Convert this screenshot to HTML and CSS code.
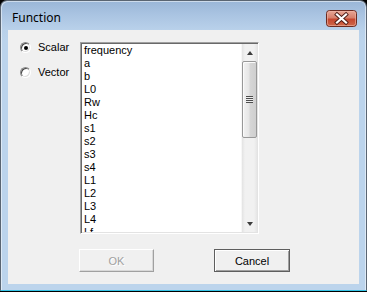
FILE: index.html
```html
<!DOCTYPE html>
<html>
<head>
<meta charset="utf-8">
<link rel="stylesheet" href="styles.css">
</head>
<body>
<div class="window">
  <div class="titlebar">
    <span class="title">Function</span>
    <div class="close">
      <svg width="31" height="17" viewBox="0 0 31 17">
        <defs>
          <linearGradient id="cg" x1="0" y1="0" x2="0" y2="1">
            <stop offset="0" stop-color="#e8a898"/>
            <stop offset="0.45" stop-color="#d7806c"/>
            <stop offset="0.55" stop-color="#c5472f"/>
            <stop offset="1" stop-color="#cf6a4c"/>
          </linearGradient>
        </defs>
        <rect x="0.5" y="0.5" width="30" height="16" rx="3" fill="url(#cg)" stroke="#6b2b21"/>
        <rect x="1.5" y="1.5" width="28" height="14" rx="2" fill="none" stroke="#f0b8a8" stroke-opacity="0.6"/>
        <path d="M11 4.5 L20 12.5 M20 4.5 L11 12.5" stroke="#4a1a14" stroke-width="4" stroke-linecap="square"/>
        <path d="M11 4.5 L20 12.5 M20 4.5 L11 12.5" stroke="#ffffff" stroke-width="2.2" stroke-linecap="square"/>
      </svg>
    </div>
  </div>
  <div class="client">
    <div class="main">
      <div class="radios">
        <div class="radio"><span class="dot checked"></span><span class="label">Scalar</span></div>
        <div class="radio"><span class="dot"></span><span class="label">Vector</span></div>
      </div>
      <div class="listbox">
        <ul class="items">
          <li>frequency</li>
          <li>a</li>
          <li>b</li>
          <li>L0</li>
          <li>Rw</li>
          <li>Hc</li>
          <li>s1</li>
          <li>s2</li>
          <li>s3</li>
          <li>s4</li>
          <li>L1</li>
          <li>L2</li>
          <li>L3</li>
          <li>L4</li>
          <li>Lf</li>
        </ul>
        <div class="scrollbar">
          <div class="arrow"><span class="tri up"></span></div>
          <div class="track">
            <div class="thumb"><span class="grip"></span></div>
          </div>
          <div class="arrow"><span class="tri down"></span></div>
        </div>
      </div>
    </div>
    <div class="buttons">
      <button class="btn disabled">OK</button>
      <button class="btn default">Cancel</button>
    </div>
  </div>
  <div class="bottom"></div>
</div>
</body>
</html>
```

FILE: styles.css
```css
html, body {
  margin: 0;
  padding: 0;
}
body {
  width: 367px;
  height: 292px;
  overflow: hidden;
  background: #000;
}
.window {
  box-sizing: border-box;
  width: 367px;
  height: 291px;
  border: 1px solid #5a6572;
  border-bottom-color: #35c4e6;
  border-radius: 7px 7px 0 0;
  background: linear-gradient(#9ab6d7 0px, #aac4e2 14px, #b9d1ea 29px, #bcd4ec 40px, #bcd4ec 100%);
  padding: 0 7px;
  display: flex;
  flex-direction: column;
  box-shadow: inset 1px 1px 0 rgba(255,255,255,0.5), inset -1px 0 0 rgba(255,255,255,0.5);
}
.titlebar {
  height: 29px;
  flex: none;
  display: flex;
  justify-content: space-between;
  align-items: flex-start;
}
.title {
  font-family: "Noto Sans", "Open Sans", sans-serif;
  font-size: 12px;
  line-height: 16px;
  color: #000;
  padding: 9px 0 0 4px;
}
.close {
  width: 31px;
  height: 17px;
  margin: 9px 2px 0 0;
}
.close svg {
  display: block;
}
.client {
  height: 254px;
  flex: none;
  background: #f0f0f0;
  box-sizing: border-box;
  padding-top: 12px;
  font-family: "Liberation Sans", Arial, sans-serif;
  font-size: 11px;
  color: #000;
}
.main {
  display: flex;
}
.radios {
  width: 72px;
  box-sizing: border-box;
  padding-left: 12px;
  margin-top: -1px;
  display: flex;
  flex-direction: column;
  gap: 12px;
}
.radio {
  display: flex;
  align-items: center;
  height: 13px;
}
.dot {
  box-sizing: border-box;
  width: 11px;
  height: 11px;
  border-radius: 50%;
  border: 1px solid;
  border-color: #8a8a8a #ffffff #ffffff #8a8a8a;
  background: #fff;
  box-shadow: inset 1px 1px 0 #4a4a4a, inset -1px -1px 0 #dcdcdc;
  margin-right: 7px;
  display: flex;
  align-items: center;
  justify-content: center;
}
.dot.checked::after {
  content: "";
  width: 4px;
  height: 4px;
  border-radius: 50%;
  background: #000;
}
.label {
  line-height: 13px;
}
.listbox {
  box-sizing: border-box;
  width: 179px;
  height: 192px;
  border: 1px solid;
  border-color: #a0a0a0 #ffffff #ffffff #a0a0a0;
  background: #fff;
  display: flex;
  padding: 1px;
  box-shadow: inset 1px 1px 0 #696969, inset -1px -1px 0 #e3e3e3;
  overflow: hidden;
}
.items {
  list-style: none;
  margin: 0;
  padding: 0 0 0 2px;
  flex: 1;
  overflow: hidden;
}
.items li {
  height: 13px;
  line-height: 13px;
  white-space: nowrap;
}
.scrollbar {
  width: 15px;
  flex: none;
  display: flex;
  flex-direction: column;
  background: linear-gradient(90deg, #e3e3e3 0%, #f1f1f1 20%, #f1f1f1 80%, #e6e6e6 100%);
  border-left: 1px solid #f7f7f7;
}
.arrow {
  height: 17px;
  flex: none;
  display: flex;
  align-items: center;
  justify-content: center;
}
.tri {
  width: 0;
  height: 0;
  border-left: 3.5px solid transparent;
  border-right: 3.5px solid transparent;
}
.tri.up {
  border-bottom: 4px solid #3c3c3c;
}
.tri.down {
  border-top: 4px solid #3c3c3c;
}
.track {
  flex: 1;
  padding: 0 0 0 0;
}
.thumb {
  box-sizing: border-box;
  height: 77px;
  margin: 0 0 0 0;
  border: 1px solid #989898;
  border-radius: 2px;
  background: linear-gradient(90deg, #f2f2f2 0%, #e6e6e6 45%, #d6d6d6 55%, #cfcfcf 100%);
  box-shadow: inset 1px 1px 0 #fbfbfb;
  display: flex;
  align-items: center;
  justify-content: center;
}
.grip {
  width: 7px;
  height: 7px;
  background: repeating-linear-gradient(#4e4e4e 0px, #4e4e4e 1px, #eeeeee 1px, #eeeeee 2px);
}
.buttons {
  display: flex;
  gap: 60px;
  padding-left: 71px;
  margin-top: 15px;
}
.btn {
  box-sizing: border-box;
  width: 75px;
  height: 23px;
  padding: 0;
  margin: 0;
  font-family: "Liberation Sans", Arial, sans-serif;
  font-size: 11px;
  background: #f0f0f0;
  color: #000;
}
.btn.disabled {
  border: 1px solid;
  border-color: #ffffff #a0a0a0 #a0a0a0 #ffffff;
  box-shadow: inset -1px -1px 0 #d8d8d8;
  color: #a0a0a0;
  text-shadow: 1px 1px 0 #ffffff;
}
.btn.default {
  width: 76px;
  border: 1px solid #5e5e5e;
  box-shadow: inset 1px 1px 0 #ffffff, inset -1px -1px 0 #a0a0a0;
}
.bottom {
  flex: 1;
}
```
